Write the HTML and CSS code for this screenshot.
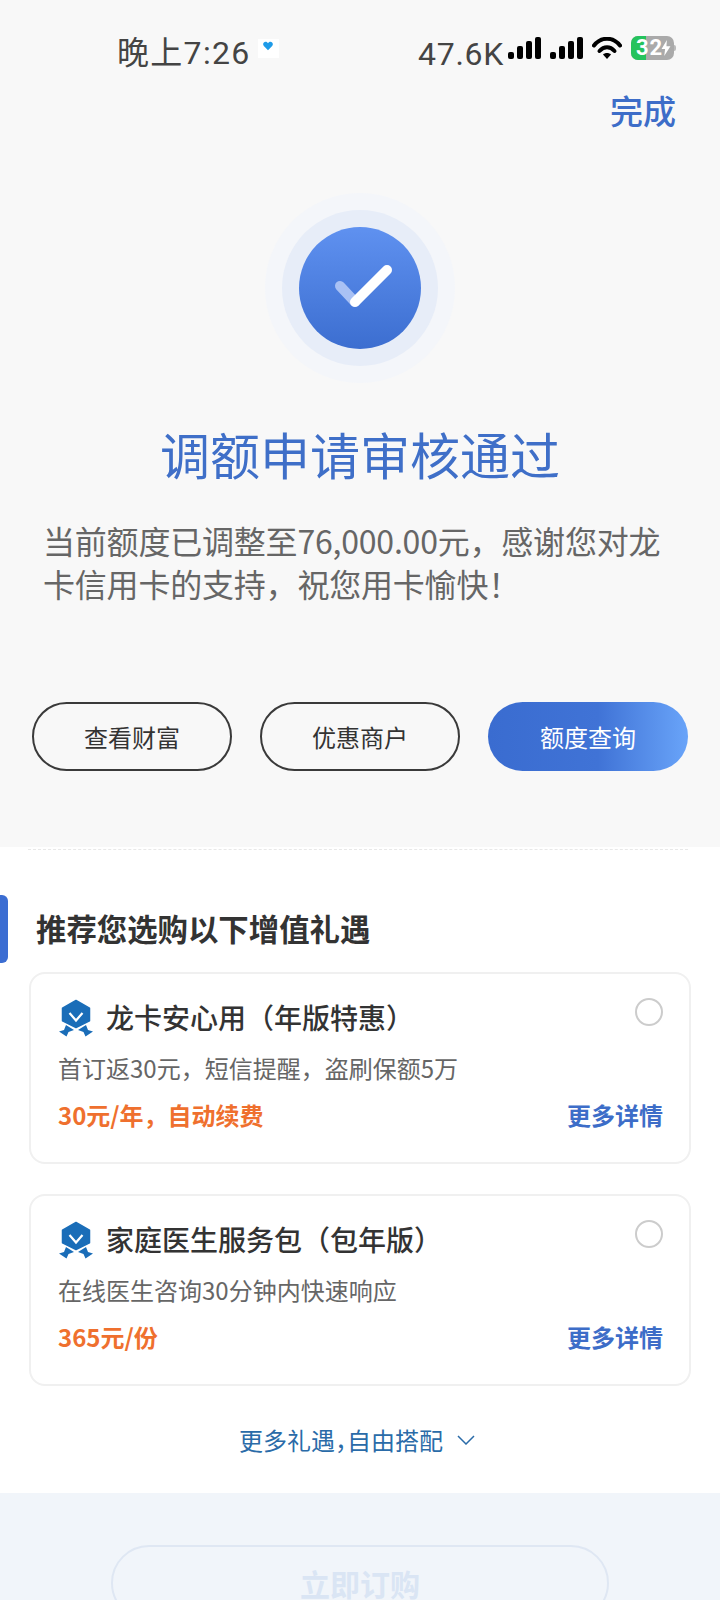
FILE: index.html
```html
<!DOCTYPE html>
<html lang="zh-CN">
<head>
<meta charset="utf-8">
<title>调额申请审核通过</title>
<link rel="stylesheet" href="styles.css">
</head>
<body>
<div class="page">
  <section class="top">
    <div class="status">
      <span class="time">晚上7:26</span>
      <span class="heart-box">
        <svg class="heart" viewBox="0 0 12 10" width="10" height="10"><path d="M6 10 1 5C-1 2.500 1 0 3 0 4.500 0 5.500.8 6 1.800 6.500.8 7.500 0 9 0c2 0 4 2.500 2 5z" fill="#1e9be8"/></svg>
      </span>
      <span class="spacer"></span>
      <span class="speed">47.6K</span>
      <svg class="signal" viewBox="0 0 33 22" width="33" height="22"><rect x="0" y="15" width="6" height="7" rx="2"/><rect x="9" y="9" width="6" height="13" rx="2"/><rect x="18" y="4" width="6" height="18" rx="2"/><rect x="27" y="0" width="6" height="22" rx="2"/></svg>
      <svg class="signal signal-two" viewBox="0 0 33 22" width="33" height="22"><rect x="0" y="15" width="6" height="7" rx="2"/><rect x="9" y="9" width="6" height="13" rx="2"/><rect x="18" y="4" width="6" height="18" rx="2"/><rect x="27" y="0" width="6" height="22" rx="2"/></svg>
      <svg class="wifi" viewBox="0 0 30 22" width="30" height="22"><path d="M2 8.500C9-.5 21-.5 28 8.500" fill="none" stroke="#000" stroke-width="4" stroke-linecap="round"/><path d="M7.500 14C12 9 18 9 22.500 14" fill="none" stroke="#000" stroke-width="4" stroke-linecap="round"/><path d="M11 17.500C13 15.500 17 15.500 19 17.500L15 22z"/></svg>
      <span class="battery">
        <span class="battery-fill"></span>
        <span class="battery-num">32</span>
        <svg class="bolt" viewBox="0 0 10 18" width="10" height="16"><path d="M6 0 0 10h4l-1 8 7-11H5.500z" fill="#fff"/></svg>
      </span>
      <span class="battery-tip"></span>
    </div>
    <div class="nav"><span class="done">完成</span></div>
    <div class="result-icon">
      <div class="ring-outer">
        <div class="ring-mid">
          <div class="disc">
            <svg viewBox="0 0 122 122" width="122" height="122"><path d="M41 59 56 75" stroke="#a9c1f4" stroke-width="10" stroke-linecap="round"/><path d="M56 75 88 43" stroke="#fff" stroke-width="10" stroke-linecap="round"/></svg>
          </div>
        </div>
      </div>
    </div>
    <h1 class="title">调额申请审核通过</h1>
    <p class="message">当前额度已调整至76,000.00元，感谢您对龙卡信用卡的支持，祝您用卡愉快！</p>
    <div class="actions">
      <button class="btn">查看财富</button>
      <button class="btn">优惠商户</button>
      <button class="btn btn-primary">额度查询</button>
    </div>
  </section>
  <section class="offers">
    <div class="dash"></div>
    <div class="heading-row">
      <span class="tab"></span>
      <h2 class="heading">推荐您选购以下增值礼遇</h2>
    </div>
    <div class="card">
      <div class="card-head">
        <svg class="badge" viewBox="0 0 34 38" width="34" height="38"><path d="M7 26 15 31 9.500 33 7.500 37.500 0 32.500 5 31z" fill="#1a6db8"/><path d="M27 26 19 31 24.500 33 26.500 37.500 34 32.500 29 31z" fill="#1a6db8"/><path d="M17 1 31 9V22L17 29 3 22V9z" fill="#1a6db8" stroke="#fff" stroke-width="3" stroke-linejoin="round"/><path d="M17 1.500 30.500 9.200V21.800L17 28.500 3.500 21.800V9.200z" fill="#1a6db8" stroke="#1a6db8" stroke-width="1.500" stroke-linejoin="round"/><path d="M10.500 14 17 21.500 23.500 14" fill="none" stroke="#fff" stroke-width="2.200"/></svg>
        <span class="card-title">龙卡安心用（年版特惠）</span>
        <span class="radio"></span>
      </div>
      <p class="card-desc">首订返30元，短信提醒，盗刷保额5万</p>
      <div class="card-foot">
        <span class="price">30元/年，自动续费</span>
        <span class="details">更多详情</span>
      </div>
    </div>
    <div class="card">
      <div class="card-head">
        <svg class="badge" viewBox="0 0 34 38" width="34" height="38"><path d="M7 26 15 31 9.500 33 7.500 37.500 0 32.500 5 31z" fill="#1a6db8"/><path d="M27 26 19 31 24.500 33 26.500 37.500 34 32.500 29 31z" fill="#1a6db8"/><path d="M17 1 31 9V22L17 29 3 22V9z" fill="#1a6db8" stroke="#fff" stroke-width="3" stroke-linejoin="round"/><path d="M17 1.500 30.500 9.200V21.800L17 28.500 3.500 21.800V9.200z" fill="#1a6db8" stroke="#1a6db8" stroke-width="1.500" stroke-linejoin="round"/><path d="M10.500 14 17 21.500 23.500 14" fill="none" stroke="#fff" stroke-width="2.200"/></svg>
        <span class="card-title">家庭医生服务包（包年版）</span>
        <span class="radio"></span>
      </div>
      <p class="card-desc">在线医生咨询30分钟内快速响应</p>
      <div class="card-foot">
        <span class="price">365元/份</span>
        <span class="details">更多详情</span>
      </div>
    </div>
    <div class="more">
      <span>更多礼遇<span class="tighter">，</span>自由搭配</span>
      <svg class="chevron" viewBox="0 0 18 10" width="18" height="10"><path d="M1 1 9 9 17 1" fill="none" stroke="#2a6ba8" stroke-width="1.500"/></svg>
    </div>
  </section>
  <footer class="footer">
    <button class="order">立即订购</button>
  </footer>
</div>
</body>
</html>
```

FILE: styles.css
```css
* { box-sizing: border-box; }
html, body { margin: 0; padding: 0; }
body {
  width: 720px;
  height: 1600px;
  overflow: hidden;
  background: #fff;
  font-family: "Noto Sans CJK SC", "Noto Sans", sans-serif;
}
.page { width: 720px; height: 1600px; overflow: hidden; display: flex; flex-direction: column; }

.top { height: 847px; background: #f8f8f8; display: flex; flex-direction: column; }

.status { height: 85px; padding: 36px 44px 0 117px; display: flex; align-items: flex-start; }
.time { font-family: Roboto, "Noto Sans CJK SC", sans-serif; font-size: 32px; line-height: 34px; letter-spacing: 1.300px; color: #444; }
.heart-box { width: 21px; height: 19px; margin: 3px 0 0 7px; background: #fff; display: flex; justify-content: center; padding-top: 2px; }
.spacer { flex: 1; }
.speed { font-family: Roboto, sans-serif; font-size: 32px; line-height: 36px; letter-spacing: .7px; color: #444; margin: 0 4px 0 0; }
.signal { margin-top: 1px; fill: #000; }
.signal-two { margin-left: 9px; }
.wifi { margin: 1px 0 0 9px; fill: #000; }
.battery { position: relative; width: 43px; height: 24px; margin: 0 0 0 9px; border-radius: 7px; background: #aaa; overflow: hidden; }
.battery-fill { position: absolute; left: 0; top: 0; bottom: 0; width: 15px; background: #25c35d; }
.battery-num { position: absolute; left: 5px; top: 0; font-family: Roboto, sans-serif; font-weight: 700; font-size: 22px; line-height: 24px; letter-spacing: 1px; color: #fff; }
.bolt { position: absolute; right: 3px; top: 4px; }
.battery-tip { width: 2px; height: 6px; margin: 9px 0 0 0; background: #bbb; border-radius: 0 2px 2px 0; }

.nav { display: flex; justify-content: flex-end; padding-right: 44px; }
.done { font-size: 33px; line-height: 50px; font-weight: 500; color: #3d6dc8; }

.result-icon { display: flex; justify-content: center; margin-top: 58px; }
.ring-outer { width: 190px; height: 190px; border-radius: 50%; background: #f4f6fa; display: flex; align-items: center; justify-content: center; }
.ring-mid { width: 156px; height: 156px; border-radius: 50%; background: #e7edf8; display: flex; align-items: center; justify-content: center; }
.disc { width: 122px; height: 122px; border-radius: 50%; background: linear-gradient(180deg, #5f91f0, #3c6ed0); }
.disc svg { display: block; }

.title { margin: 38px 0 0; text-align: center; font-size: 50px; line-height: 64px; font-weight: 400; color: #3f6fc8; }
.message { margin: 34px 50px 0 43px; font-size: 32px; line-height: 42.500px; letter-spacing: -.2px; color: #666; }
.tighter { font-feature-settings: "halt"; }

.actions { margin-top: 98px; padding: 0 32px; display: flex; justify-content: space-between; }
.btn { width: 200px; height: 69px; border: 2px solid #3a3a3a; border-radius: 35px; background: transparent; font: inherit; font-size: 24px; color: #333; padding: 0; }
.btn-primary { border: 0; color: #fff; background: linear-gradient(90deg, #3a6cd0 0%, #4073d6 55%, #69a4f9 100%); }

.offers { flex: 1; background: #fff; display: flex; flex-direction: column; align-items: stretch; }
.dash { height: 0; margin: 2px 32px 0 28px; border-top: 1px dashed #e8e8e8; }
.heading-row { display: flex; align-items: center; height: 68px; margin-top: 45px; }
.tab { width: 8px; height: 68px; background: #3b6dd2; border-radius: 0 6px 6px 0; }
.heading { margin: 0 0 2px 28px; font-size: 30.400px; line-height: 40px; font-weight: 700; color: #333; }

.card { margin: 9px 29px 20px 29px; height: 192px; border: 2px solid #f0f0f0; border-radius: 16px; padding: 25px 26px 0 27px; background: #fff; }
.card + .card { margin-top: 10px; }
.card-head { display: flex; align-items: flex-start; height: 38px; }
.badge { flex: none; margin-left: 1px; }
.card-title { flex: 1; margin-left: 13px; font-size: 28px; line-height: 36px; font-weight: 500; color: #333; }
.radio { flex: none; width: 28px; height: 28px; margin-top: -1px; border: 2px solid #ccc; border-radius: 50%; }
.card-desc { margin: 14px 0 0; font-size: 24px; line-height: 34px; color: #666; }
.card-foot { margin-top: 13px; display: flex; justify-content: space-between; align-items: center; }
.price { font-size: 24px; line-height: 34px; font-weight: 700; color: #ef702e; }
.details { font-size: 24px; line-height: 34px; font-weight: 700; color: #3d6dc8; }

.more { display: flex; justify-content: center; align-items: center; gap: 14px; margin-top: 17px; padding-right: 6px; font-size: 24px; line-height: 34px; color: #2a6ba8; }

.footer { height: 107px; background: #f1f5fa; padding-top: 52px; display: flex; justify-content: center; flex: none; }
.order { width: 498px; height: 76px; flex: none; border: 2px solid #dfe7f3; border-radius: 38px; background: transparent; font: inherit; font-size: 30px; font-weight: 700; color: #dae5f4; padding: 0; }
```
